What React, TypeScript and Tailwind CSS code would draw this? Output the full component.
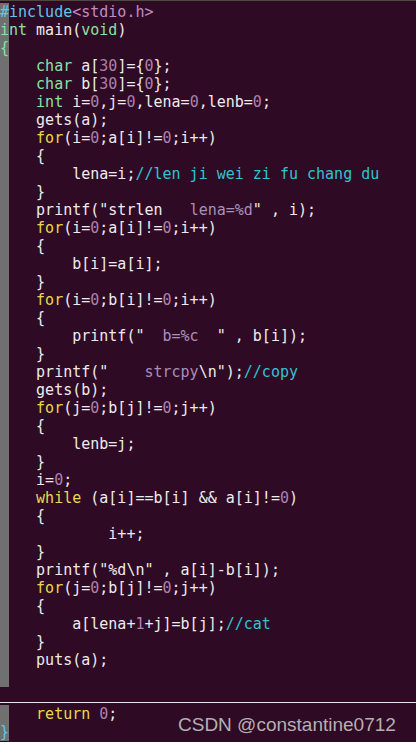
type Seg = [string, string];

const W = 'text-[#ececec]';
const G = 'text-[#86e3a4]';
const Y = 'text-[#e9d84e]';
const P = 'text-[#ad80ad]';
const S = 'text-[#a890b8]';
const C = 'text-[#2fc3d3]';
const B = 'text-[#5fc6e8]';
const K = 'text-[#c28cc4]';

const lines: Seg[][] = [
  [[B, '#include'], [K, '<stdio.h>']],
  [[G, 'int'], [W, ' main('], [G, 'void'], [W, ')']],
  [[G, '{']],
  [[W, '    '], [G, 'char'], [W, ' a['], [P, '30'], [W, ']={'], [P, '0'], [W, '};']],
  [[W, '    '], [G, 'char'], [W, ' b['], [P, '30'], [W, ']={'], [P, '0'], [W, '};']],
  [[W, '    '], [G, 'int'], [W, ' i='], [P, '0'], [W, ',j='], [P, '0'], [W, ',lena='], [P, '0'], [W, ',lenb='], [P, '0'], [W, ';']],
  [[W, '    gets(a);']],
  [[W, '    '], [Y, 'for'], [W, '(i='], [P, '0'], [W, ';a[i]!='], [P, '0'], [W, ';i++)']],
  [[W, '    {']],
  [[W, '        lena=i;'], [C, '//len ji wei zi fu chang du']],
  [[W, '    }']],
  [[W, '    printf("strlen   '], [S, 'lena=%d'], [W, '" , i);']],
  [[W, '    '], [Y, 'for'], [W, '(i='], [P, '0'], [W, ';a[i]!='], [P, '0'], [W, ';i++)']],
  [[W, '    {']],
  [[W, '        b[i]=a[i];']],
  [[W, '    }']],
  [[W, '    '], [Y, 'for'], [W, '(i='], [P, '0'], [W, ';b[i]!='], [P, '0'], [W, ';i++)']],
  [[W, '    {']],
  [[W, '        printf("  '], [S, 'b=%c'], [W, '  " , b[i]);']],
  [[W, '    }']],
  [[W, '    printf("    '], [S, 'strcpy'], [W, '\\n");'], [C, '//copy']],
  [[W, '    gets(b);']],
  [[W, '    '], [Y, 'for'], [W, '(j='], [P, '0'], [W, ';b[j]!='], [P, '0'], [W, ';j++)']],
  [[W, '    {']],
  [[W, '        lenb=j;']],
  [[W, '    }']],
  [[W, '    i='], [P, '0'], [W, ';']],
  [[W, '    '], [Y, 'while'], [W, ' (a[i]==b[i] && a[i]!='], [P, '0'], [W, ')']],
  [[W, '    {']],
  [[W, '            i++;']],
  [[W, '    }']],
  [[W, '    printf("%d\\n" , a[i]-b[i]);']],
  [[W, '    '], [Y, 'for'], [W, '(j='], [P, '0'], [W, ';b[j]!='], [P, '0'], [W, ';j++)']],
  [[W, '    {']],
  [[W, '        a[lena+'], [P, '1'], [W, '+j]=b[j];'], [C, '//cat']],
  [[W, '    }']],
  [[W, '    puts(a);']],
  [[W, ' ']],
];

const tail: Seg[][] = [
  [[W, '    '], [Y, 'return'], [W, ' '], [P, '0'], [W, ';']],
  [[B, '}']],
];

function Line({ segs }: { segs: Seg[] }) {
  const first = segs[0][1];
  const head = first.charAt(0);
  const rest: Seg[] = [[segs[0][0], first.slice(1)], ...segs.slice(1)];
  return (
    <div className="flex h-[18px] items-center whitespace-pre">
      <span className={`w-[9px] bg-[#707070] ${segs[0][0]}`}>{head === ' ' ? '\u00a0' : head}</span>
      {rest.map(([cls, t], i) => (
        <span key={i} className={cls}>
          {t}
        </span>
      ))}
    </div>
  );
}

export default function App() {
  return (
    <div
      className="relative h-[742px] w-[416px] overflow-hidden bg-[#2f0a24] text-[15px] leading-[18px]"
      style={{ fontFamily: '"DejaVu Sans Mono", "Liberation Mono", monospace' }}
    >
      <div className="h-px bg-[#4d4a3c]" />
      <div className="pt-[2px]">
        {lines.map((segs, i) => (
          <Line key={i} segs={segs} />
        ))}
      </div>
      <div className="mt-[15px] h-px bg-[#e6e6e6]" />
      <div className="pt-[2px]">
        {tail.map((segs, i) => (
          <Line key={i} segs={segs} />
        ))}
      </div>

      {/* watermark */}
      <div
        className="absolute left-[178px] top-[713px] text-[19px] leading-[24px] text-[#b4b0b3]"
        style={{ fontFamily: '"Liberation Sans", Arial, sans-serif' }}
      >
        CSDN @constantine0712
      </div>
    </div>
  );
}
